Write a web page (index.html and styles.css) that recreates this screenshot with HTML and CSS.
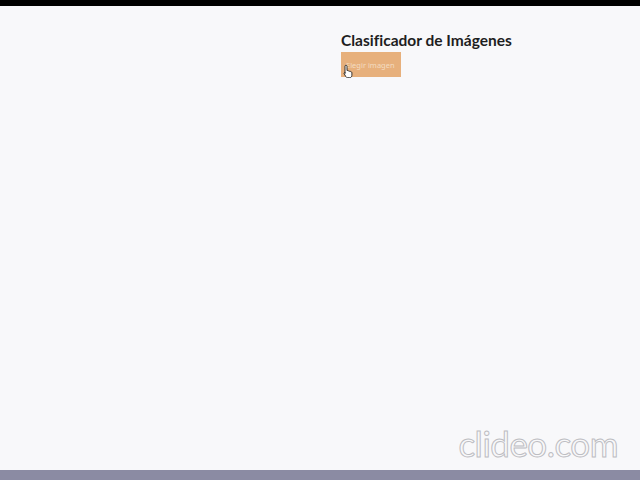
FILE: index.html
```html
<!DOCTYPE html>
<html lang="es">
<head>
<meta charset="utf-8">
<link rel="stylesheet" href="styles.css">
</head>
<body>
<div class="topbar"></div>
<main class="stage">
  <section class="app">
    <h1 class="title">Clasificador de Imágenes</h1>
    <div class="btn-wrap">
      <button class="btn">Elegir imagen</button>
      <svg class="cursor" width="11" height="14" viewBox="0 0 11 14">
        <path d="M3 1.2c.6 0 1 .4 1 1V6.5l.3-.1c.5 0 .9.3 1 .6.4-.2 1-.1 1.2.3.4-.2 1-.1 1.3.4l.1.2c.5-.1 1 .3 1 .8v2.6c0 1.3-.9 2.4-2.1 2.4H4.6c-.7 0-1.3-.4-1.7-1L1.2 9.8c-.3-.4-.2-.9.2-1.1.4-.2.8-.1 1.1.2L2 9.4V2.2c0-.6.4-1 1-1z" fill="#fff" stroke="#222" stroke-width="0.9"/>
      </svg>
    </div>
  </section>
  <div class="watermark">clideo.com</div>
</main>
<div class="bottombar"></div>
</body>
</html>
```

FILE: styles.css
```css
html, body {
  margin: 0;
  padding: 0;
  height: 480px;
  overflow: hidden;
}
body {
  display: flex;
  flex-direction: column;
  background: #f8f8fa;
  font-family: "Noto Sans", "Open Sans", sans-serif;
}
.topbar {
  height: 6px;
  background: #000;
  flex: none;
}
.stage {
  flex: 1;
  position: relative;
  padding: 25px 0 0 341px;
}
.title {
  margin: 0;
  font-family: "Lato", "Noto Sans", sans-serif;
  font-size: 15.5px;
  font-weight: 700;
  font-variant-ligatures: none;
  color: #1e1e1e;
  line-height: 19px;
}
.btn-wrap {
  position: relative;
  margin-top: 2px;
  width: 60px;
}
.btn {
  display: block;
  width: 60px;
  height: 25px;
  border: none;
  background: #e7b07c;
  color: #f3dcc0;
  font-family: "Noto Sans", sans-serif;
  font-size: 7.5px;
  padding: 0 0 0 5px;
  text-align: left;
}
.cursor {
  position: absolute;
  left: 2px;
  top: 12px;
}
.watermark {
  position: absolute;
  right: 22px;
  bottom: 6px;
  font-family: "Lato", "Noto Sans", sans-serif;
  font-size: 35px;
  letter-spacing: -0.5px;
  color: transparent;
  -webkit-text-stroke: 1px #bdbdc2;
}
.bottombar {
  height: 10px;
  background: #8b8ba3;
  flex: none;
}
```
